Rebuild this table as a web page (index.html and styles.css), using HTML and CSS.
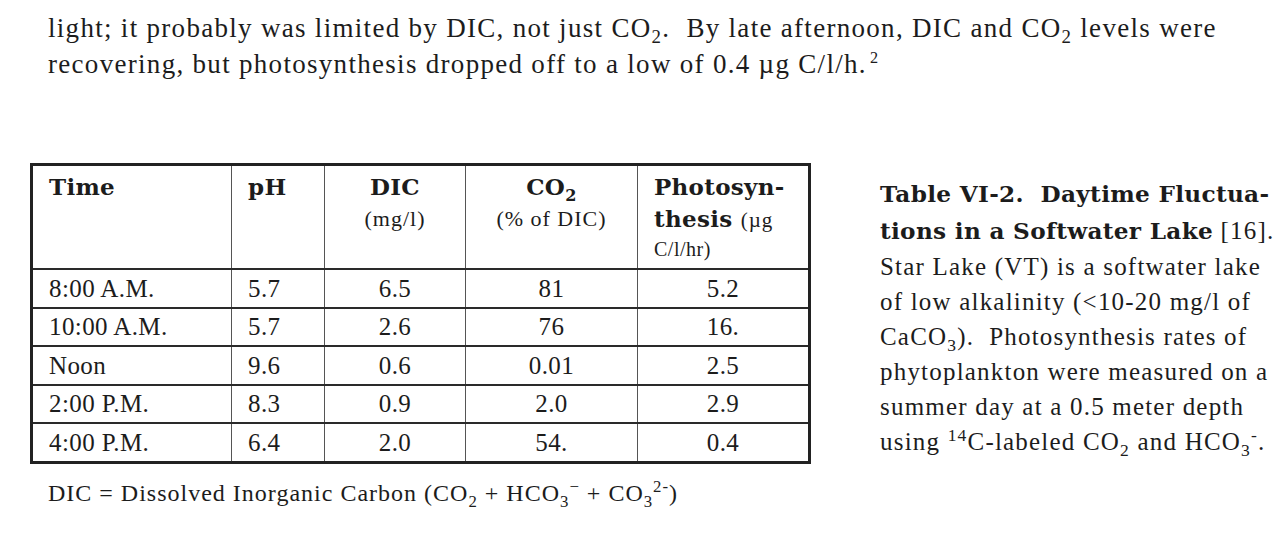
FILE: index.html
```html
<!DOCTYPE html>
<html lang="en">
<head>
    <meta charset="UTF-8">
    <title>Table VI-2</title>
    <link rel="stylesheet" href="styles.css">
</head>
<body>

    <p class="lead">
        light; it probably was limited by DIC, not just CO<sub>2</sub>.&nbsp; By late afternoon, DIC and CO<sub>2</sub> levels were<br>
        recovering, but photosynthesis dropped off to a low of 0.4 &micro;g C/l/h.<sup class="note-ref">2</sup>
    </p>

    <div class="figure">
        <div class="table-box">
            <table class="data">
                <tr class="head">
                    <th class="c-time">Time</th>
                    <th class="c-ph">pH</th>
                    <th class="c-dic">DIC<span class="unit">(mg/l)</span></th>
                    <th class="c-co2">CO<sub>2</sub><span class="unit">(% of DIC)</span></th>
                    <th class="c-photo">Photosyn-<br>thesis <span class="unit-in">(&micro;g</span><span class="unit-line">C/l/hr)</span></th>
                </tr>
                <tr><td>8:00 A.M.</td><td>5.7</td><td>6.5</td><td>81</td><td>5.2</td></tr>
                <tr><td>10:00 A.M.</td><td>5.7</td><td>2.6</td><td>76</td><td>16.</td></tr>
                <tr><td>Noon</td><td>9.6</td><td>0.6</td><td>0.01</td><td>2.5</td></tr>
                <tr><td>2:00 P.M.</td><td>8.3</td><td>0.9</td><td>2.0</td><td>2.9</td></tr>
                <tr><td>4:00 P.M.</td><td>6.4</td><td>2.0</td><td>54.</td><td>0.4</td></tr>
            </table>
            <p class="foot">DIC = Dissolved Inorganic Carbon (CO<sub>2</sub> + HCO<sub>3</sub><sup>&minus;</sup> + CO<sub>3</sub><sup>2-</sup>)</p>
        </div>

        <div class="caption">
            <b>Table VI-2.&nbsp; Daytime Fluctua-<br>tions in a Softwater Lake</b> [16].<br>
            Star Lake (VT) is a softwater lake<br>
            of low alkalinity (&lt;10-20 mg/l of<br>
            CaCO<sub>3</sub>).&nbsp; Photosynthesis rates of<br>
            phytoplankton were measured on a<br>
            summer day at a 0.5 meter depth<br>
            using <sup>14</sup>C-labeled CO<sub>2</sub> and HCO<sub>3</sub><sup>-</sup>.
        </div>
    </div>

</body>
</html>
```

FILE: styles.css
```css
body {
    margin: 0px;
    background-color: white;
    color: #1c1c1c;
    font-family: "Liberation Serif", "Times New Roman", serif;
}

sub, sup {
    font-size: 0.7em;
    line-height: 0;
}

.lead {
    margin: 0px;
    padding: 10px 0 0 48px;
    font-size: 27px;
    letter-spacing: 1.3px;
    line-height: 36px;
}
.note-ref {
    font-size: 0.6em;
    vertical-align: 0.6em;
    margin-left: 3px;
}

.figure {
    display: flex;
    margin-top: 81px;
    padding-left: 30px;
}

.table-box {
    width: 781px;
}

.data {
    width: 100%;
    border-collapse: collapse;
    border: 3px solid #222;
    font-size: 25px;
    letter-spacing: 0.4px;
}
.data td {
    height: 36.5px;
    padding: 0px;
    border-top: 2px solid #2a2a2a;
    border-left: 1px solid #555;
    text-align: center;
    line-height: 1;
}
.data td:first-child,
.data td:nth-child(2) {
    text-align: left;
    padding-left: 16px;
}

.head th {
    height: 97px;
    vertical-align: top;
    padding: 5px 0 0 0;
    border-left: 1px solid #555;
    font-family: "DejaVu Serif", serif;
    font-size: 23px;
    font-weight: bold;
    letter-spacing: 0.3px;
    line-height: 32px;
}
.head th.c-time,
.head th.c-ph,
.head th.c-photo {
    text-align: left;
    padding-left: 16px;
}
.c-time { width: 182px; }
.c-ph { width: 76px; }
.c-dic { width: 140px; }
.c-co2 { width: 171px; }

.unit {
    display: block;
    margin-top: 4px;
    font-family: "Liberation Serif", serif;
    font-weight: normal;
    font-size: 22px;
    letter-spacing: 1px;
    line-height: 24px;
}
.unit-in {
    font-family: "Liberation Serif", serif;
    font-weight: normal;
    font-size: 21px;
    letter-spacing: 1px;
}
.unit-line {
    display: block;
    font-family: "Liberation Serif", serif;
    font-weight: normal;
    font-size: 20px;
    letter-spacing: 0.5px;
    line-height: 26px;
}

.foot {
    margin: 16px 0 0 18px;
    font-size: 24px;
    letter-spacing: 1px;
}

.caption {
    margin: 12px 0 0 69px;
    font-size: 25px;
    letter-spacing: 1.2px;
    line-height: 35px;
    white-space: nowrap;
}
.caption b {
    font-family: "DejaVu Serif", serif;
    font-size: 23.2px;
    letter-spacing: 0.3px;
    line-height: 37px;
}
```
